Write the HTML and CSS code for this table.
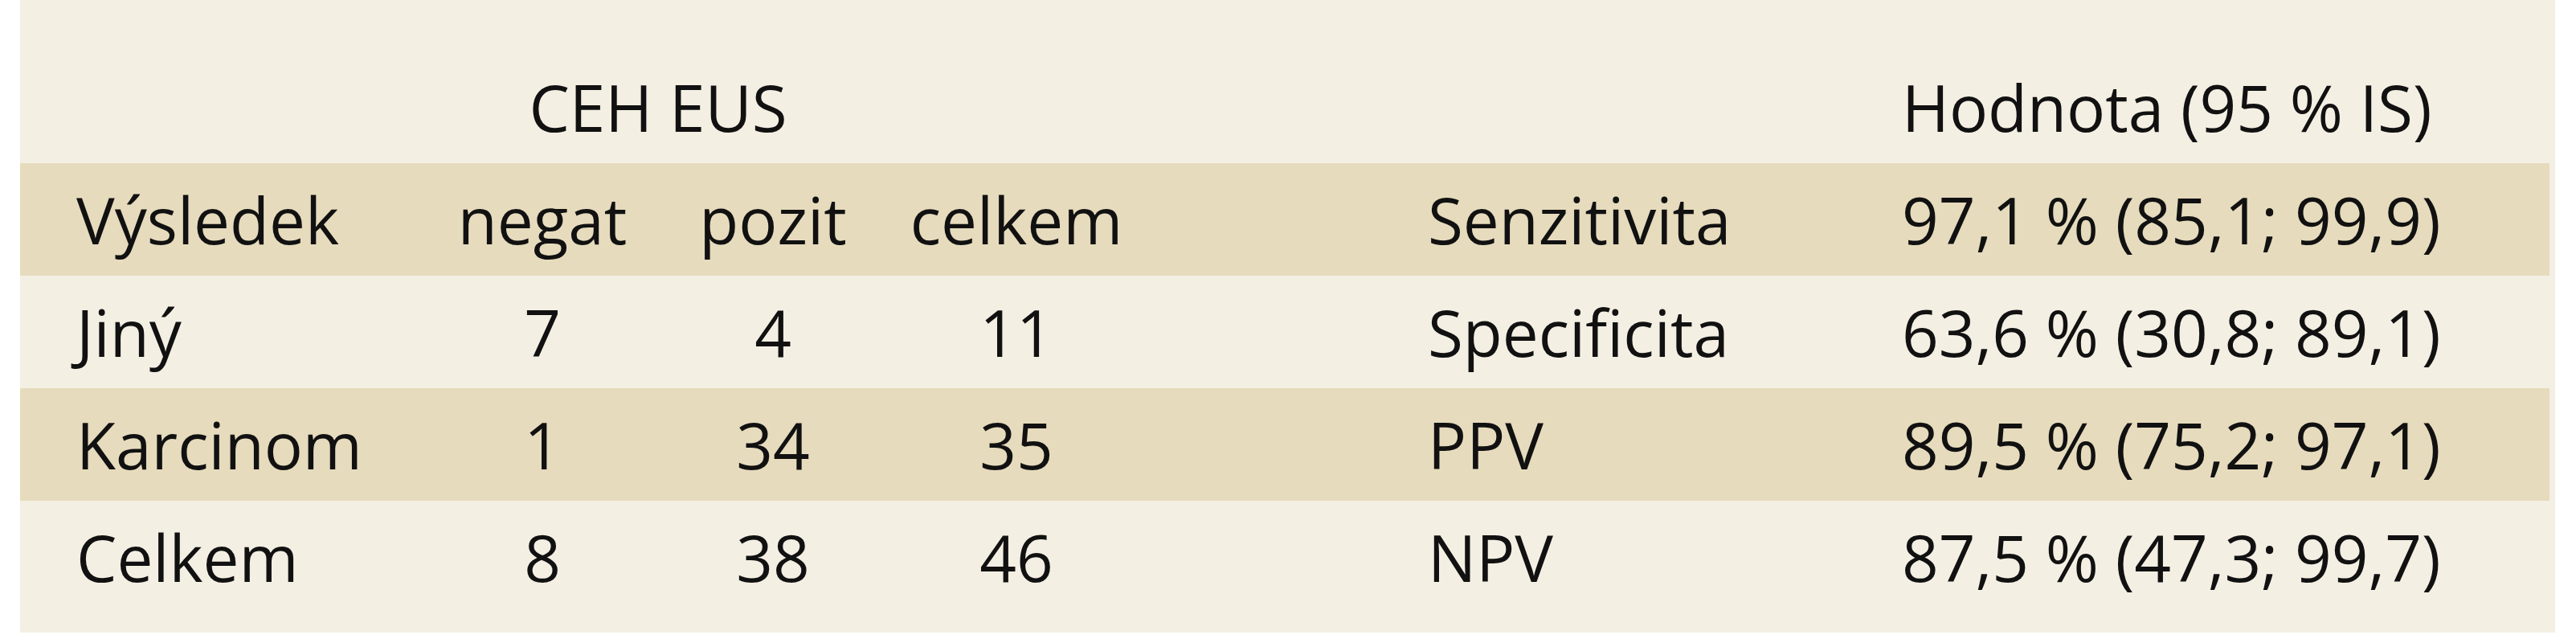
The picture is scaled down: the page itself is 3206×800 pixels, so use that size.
FILE: index.html
```html
<!DOCTYPE html>
<html lang="cs">
<head>
<meta charset="utf-8">
<title>CEH EUS</title>
<link rel="stylesheet" href="styles.css">
</head>
<body>
<div class="panel">
  <div class="row">
    <div class="group">CEH EUS</div>
    <div class="value">Hodnota (95 % IS)</div>
  </div>
  <div class="row striped">
    <div class="label">Výsledek</div>
    <div class="num">negat</div>
    <div class="num">pozit</div>
    <div class="num">celkem</div>
    <div class="metric">Senzitivita</div>
    <div class="value">97,1 % (85,1; 99,9)</div>
  </div>
  <div class="row">
    <div class="label">Jiný</div>
    <div class="num">7</div>
    <div class="num">4</div>
    <div class="num">11</div>
    <div class="metric">Specificita</div>
    <div class="value">63,6 % (30,8; 89,1)</div>
  </div>
  <div class="row striped">
    <div class="label">Karcinom</div>
    <div class="num">1</div>
    <div class="num">34</div>
    <div class="num">35</div>
    <div class="metric">PPV</div>
    <div class="value">89,5 % (75,2; 97,1)</div>
  </div>
  <div class="row">
    <div class="label">Celkem</div>
    <div class="num">8</div>
    <div class="num">38</div>
    <div class="num">46</div>
    <div class="metric">NPV</div>
    <div class="value">87,5 % (47,3; 99,7)</div>
  </div>
</div>
</body>
</html>
```
FILE: styles.css
```css
html, body {
  margin: 0;
  padding: 0;
  background: #ffffff;
}

.panel {
  box-sizing: border-box;
  margin-left: 25px;
  width: 3155px;
  height: 787px;
  padding: 63px 0 24px 0;
  background: #f4efe3;
  font-family: "Open Sans", "Liberation Sans", sans-serif;
  font-size: 80px;
  font-weight: 500;
  color: #111111;
}

.row {
  display: grid;
  grid-template-columns: 437px 286px 288px 318px 353px 590px 1fr;
  height: 140px;
  line-height: 140px;
  padding-left: 70px;
  margin-right: 7px;
  white-space: nowrap;
}

.striped {
  background: #e6dbbd;
}

.label {
  grid-column: 1;
}

.num {
  text-align: center;
}

.group {
  grid-column: 2 / 4;
  text-align: center;
}

.metric {
  grid-column: 6;
}

.value {
  grid-column: 7;
}
```
